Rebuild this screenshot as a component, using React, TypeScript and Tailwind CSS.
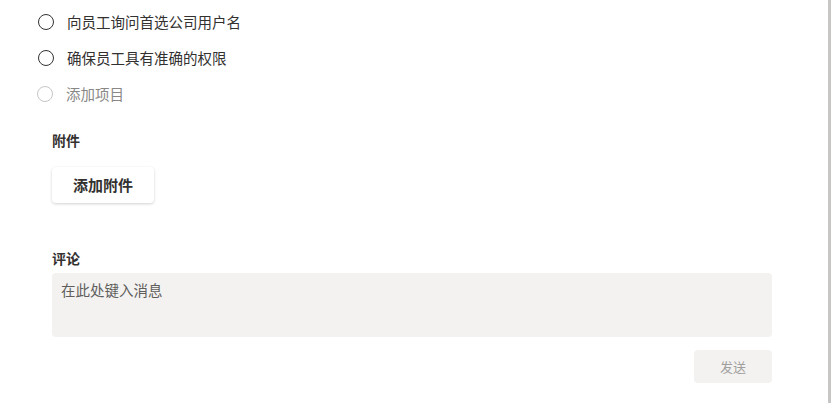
import { useState } from "react";

const ITEMS = ["向员工询问首选公司用户名", "确保员工具有准确的权限"];

export default function App() {
  const [done, setDone] = useState<boolean[]>(ITEMS.map(() => false));
  const [msg, setMsg] = useState("");

  return (
    <div
      className="flex w-[832px] h-[406px] bg-white text-[#323130]"
      style={{ fontFamily: '"Noto Sans CJK SC", "Noto Sans", sans-serif' }}
    >
      <div className="flex-1 flex flex-col pt-1">
        {/* Checklist */}
        {ITEMS.map((item, i) => (
          <div key={item} className="flex items-center h-9 pl-[38px]">
            <button
              onClick={() => setDone((d) => d.map((v, j) => (j === i ? !v : v)))}
              className="w-4 h-4 rounded-full border-[1.5px] border-[#323130] shrink-0"
            />
            <span className="ml-[13px] text-[14.5px] leading-5">{item}</span>
          </div>
        ))}
        <div className="flex items-center h-9 pl-[37px]">
          <span className="w-4 h-4 rounded-full border border-[#c8c6c4] shrink-0" />
          <span className="ml-[13px] text-[14.5px] leading-5 text-[#8a8886]">添加项目</span>
        </div>

        {/* Attachments */}
        <div className="pl-[52px] w-[772px]">
          <div className="mt-[18px] text-[14px] leading-5 font-semibold text-[#323130]">附件</div>
          <button className="mt-[17px] w-[102px] h-9 bg-white rounded-sm shadow-[0_1px_3px_rgba(0,0,0,0.18)] text-[15px] font-semibold">
            添加附件
          </button>

          {/* Comments */}
          <div className="mt-[45px] text-[14px] leading-5 font-semibold">评论</div>
          <textarea
            value={msg}
            onChange={(e) => setMsg(e.target.value)}
            placeholder="在此处键入消息"
            className="mt-[5px] block w-full h-16 resize-none rounded-sm bg-[#f3f2f1] px-[9px] py-[7px] text-[14.5px] leading-5 outline-none placeholder:text-[#605e5c]"
          />
          <div className="flex justify-end mt-[13px]">
            <button
              disabled={!msg}
              className="w-[78px] h-[33px] bg-[#f3f2f1] text-[13px] text-[#a19f9d] rounded-sm"
            >
              发送
            </button>
          </div>
        </div>
      </div>

      {/* Scrollbar */}
      <div className="w-[3px] h-[403px] bg-[#c8c6c4]" />
      <div className="w-px" />
    </div>
  );
}
